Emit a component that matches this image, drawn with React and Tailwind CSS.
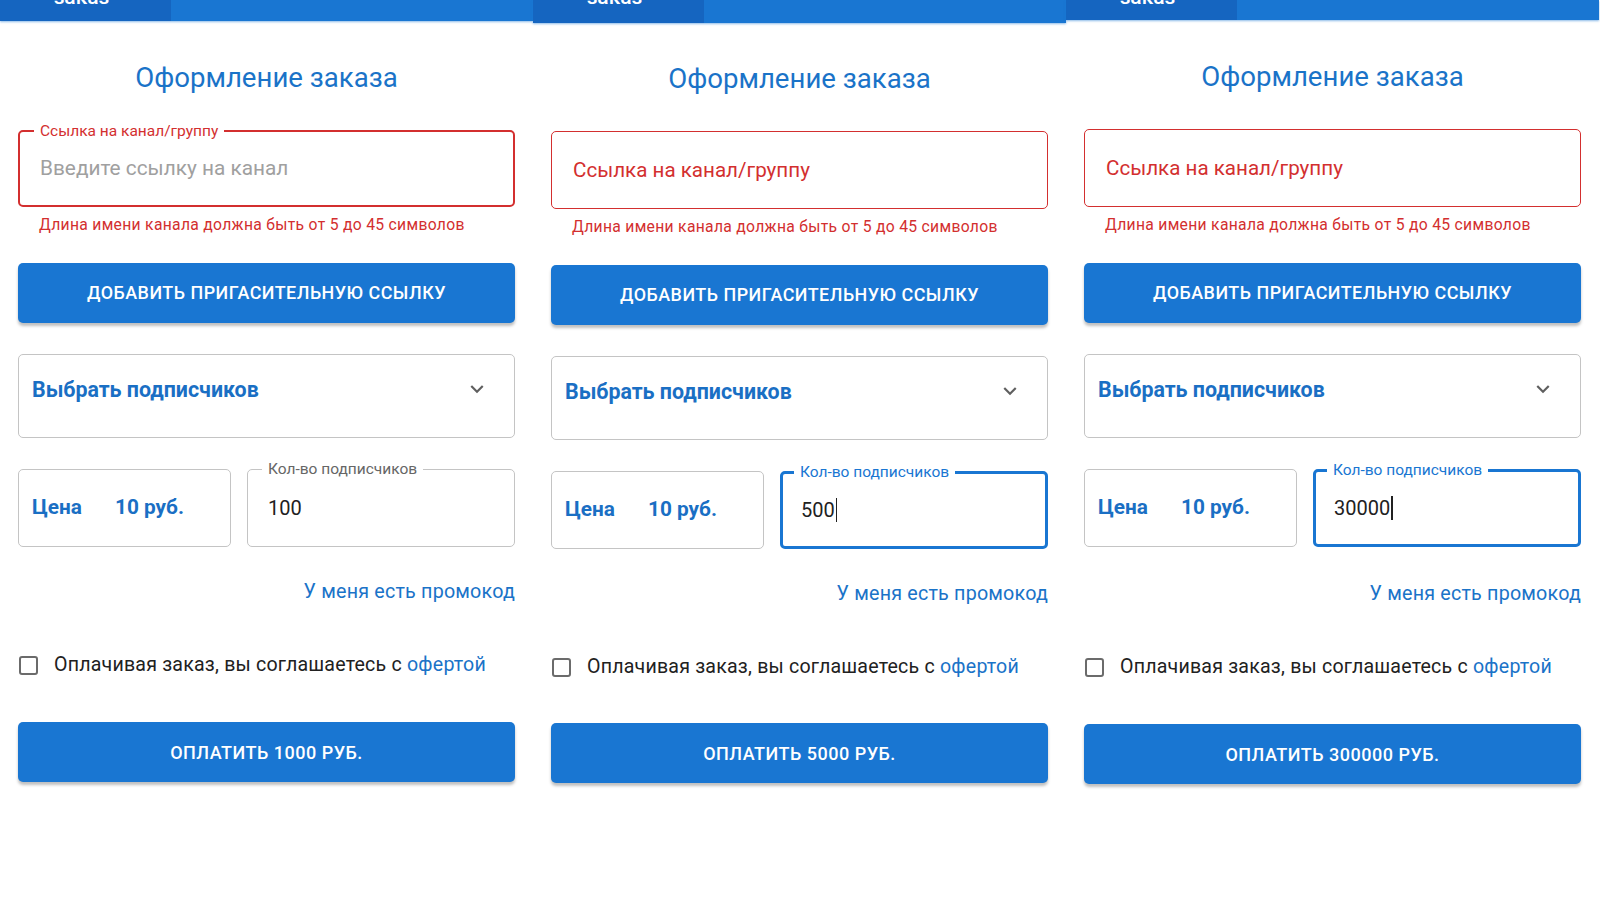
import React from 'react';

const panels = [
  { bar: 'h-[21px]', top: 'mt-[41px]', promoTop: 'mt-[33px]', payTop: 'mt-[43px]', linkFocused: true, qty: '100', qtyFocused: false, pay: '1000' },
  { bar: 'h-[23px]', top: 'mt-[40px]', promoTop: 'mt-[33px]', payTop: 'mt-[42px]', linkFocused: false, qty: '500', qtyFocused: true, pay: '5000' },
  { bar: 'h-[20px]', top: 'mt-[41px]', promoTop: 'mt-[35px]', payTop: 'mt-[43px]', linkFocused: false, qty: '30000', qtyFocused: true, pay: '300000' },
];

function Chevron() {
  return (
    <svg viewBox="0 0 24 24" className="h-[26px] w-[26px] fill-[#5f5f5f]">
      <path d="M16.59 8.59 12 13.17 7.41 8.59 6 10l6 6 6-6z" />
    </svg>
  );
}

function LinkField({ focused }) {
  if (focused) {
    return (
      <div className="relative mt-[36px] h-[77px] rounded-[5px] border-2 border-[#d32f2f] flex items-center pl-[20px]">
        <span className="absolute left-[14px] -top-[11px] bg-white px-[6px] text-[15.5px] leading-[20px] text-[#d32f2f]">
          Ссылка на канал/группу
        </span>
        <span className="text-[20.8px] text-[#a0a0a0]">Введите ссылку на канал</span>
      </div>
    );
  }
  return (
    <div className="mt-[36px] h-[78px] rounded-[5px] border border-[#d32f2f] flex items-center pl-[21px]">
      <span className="text-[20.6px] text-[#d32f2f]">Ссылка на канал/группу</span>
    </div>
  );
}

function QtyField({ value, focused }) {
  return (
    <div
      className={
        focused
          ? 'relative flex-1 rounded-[5px] border-[3px] border-[#1976d2] flex items-center pl-[18px]'
          : 'relative flex-1 rounded-[5px] border border-[#c4c4c4] flex items-center pl-[20px]'
      }
    >
      <span
        className={
          focused
            ? 'absolute left-[11px] -top-[12px] bg-white px-[6px] text-[15.5px] leading-[20px] text-[#1976d2]'
            : 'absolute left-[14px] -top-[11px] bg-white px-[6px] text-[15.5px] leading-[20px] text-[#666]'
        }
      >
        Кол-во подписчиков
      </span>
      <span className="text-[20px] text-[#212121]">{value}</span>
      {focused && <span className="ml-[1px] h-[24px] w-[1.5px] bg-[#212121]" />}
    </div>
  );
}

function Panel({ p }) {
  return (
    <div className="w-[533px] flex flex-col">
      <div className={`${p.bar} flex overflow-hidden bg-[#1976d2] shadow-[0_1px_2px_rgba(25,118,210,0.5)]`}>
        <div className="w-[171px] bg-[#1565c0] flex justify-center pr-[8px]">
          <span className="-mt-[16px] text-[21px] leading-[26px] font-medium text-white">заказ</span>
        </div>
      </div>

      <div className="px-[18px] flex flex-col">
        <h1 className={`${p.top} text-center text-[27.6px] leading-[32px] font-normal text-[#1a73c8]`}>
          Оформление заказа
        </h1>

        <LinkField focused={p.linkFocused} />

        <p className="mt-[8px] pl-[21px] text-[15.7px] leading-[20px] tracking-[0.3px] text-[#d32f2f]">
          Длина имени канала должна быть от 5 до 45 символов
        </p>

        <button className="mt-[28px] h-[60px] rounded-[5px] bg-[#1976d2] text-white text-[17.9px] font-medium tracking-[0.5px] uppercase shadow-[0_3px_3px_rgba(0,0,0,0.25)]">
          Добавить пригасительную ссылку
        </button>

        <div className="mt-[31px] h-[84px] rounded-[5px] border border-[#c4c4c4] flex items-start justify-between pl-[13px] pr-[24px] pt-[21px]">
          <span className="text-[21.4px] leading-[28px] font-bold text-[#1a6fc4]">Выбрать подписчиков</span>
          <Chevron />
        </div>

        <div className="mt-[31px] h-[78px] flex gap-4">
          <div className="w-[213px] rounded-[5px] border border-[#c4c4c4] flex items-center pl-[13px]">
            <span className="w-[83px] text-[20.8px] font-bold text-[#1a6fc4]">Цена</span>
            <span className="text-[20.8px] font-bold text-[#1a6fc4]">10 руб.</span>
          </div>
          <QtyField value={p.qty} focused={p.qtyFocused} />
        </div>

        <div className={`${p.promoTop} text-right text-[19.7px] leading-[24px] tracking-[0.2px] text-[#1a73c8]`}>
          У меня есть промокод
        </div>

        <label className="mt-[47px] h-[28px] flex items-center">
          <span className="ml-[1px] h-[19px] w-[19px] rounded-[3px] border-2 border-[#6b6b6b]" />
          <span className="ml-[16px] text-[19.6px] tracking-[0.2px] text-[#212121]">
            Оплачивая заказ, вы соглашаетесь с <span className="text-[#1a73c8]">офертой</span>
          </span>
        </label>

        <button className={`${p.payTop} h-[60px] rounded-[5px] bg-[#1976d2] text-white text-[18px] font-medium tracking-[0.5px] uppercase shadow-[0_3px_3px_rgba(0,0,0,0.25)]`}>
          Оплатить {p.pay} руб.
        </button>
      </div>
    </div>
  );
}

export default function App() {
  return (
    <div className="w-[1600px] h-[900px] overflow-hidden bg-white flex font-['Roboto',sans-serif]">
      {panels.map((p, i) => (
        <Panel key={i} p={p} />
      ))}
    </div>
  );
}
